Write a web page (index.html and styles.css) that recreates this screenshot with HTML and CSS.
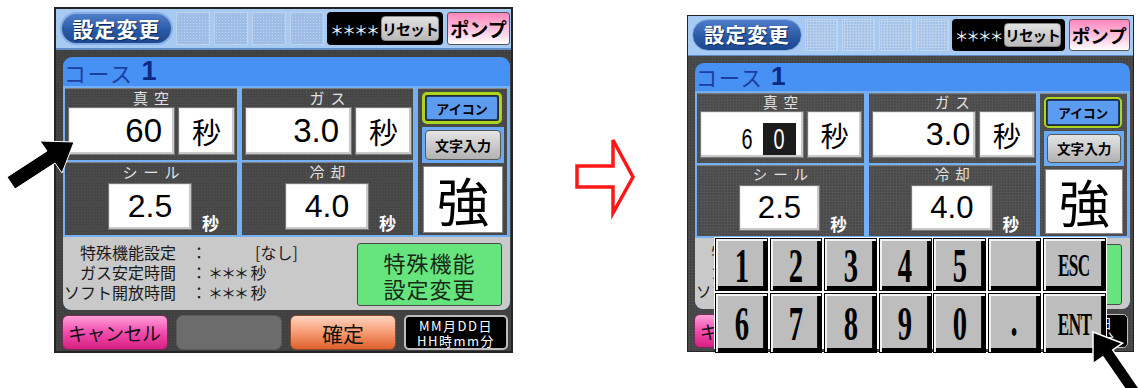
FILE: index.html
```html
<!DOCTYPE html>
<html lang="ja">
<head>
<meta charset="utf-8">
<title>設定変更</title>
<link rel="stylesheet" href="styles.css">
</head>
<body>
<div class="page">

  <div class="screen screen-left">
    <div class="hdr">
      <div class="pill">設定変更</div>
      <div class="sq"></div><div class="sq"></div><div class="sq"></div><div class="sq sq-last"></div>
      <div class="reset"><span class="stars">＊＊＊＊</span><span class="reset-btn">リセット</span></div>
      <div class="pump">ポンプ</div>
    </div>
    <div class="body">
      <div class="panel">
        <div class="course"><span class="course-label">コース</span><span class="course-num">1</span></div>
        <div class="grid">
          <div class="cell">
            <div class="cell-label">真空</div>
            <div class="cell-inputs">
              <div class="num num-wide">60</div>
              <div class="num unit">秒</div>
            </div>
          </div>
          <div class="cell">
            <div class="cell-label">ガス</div>
            <div class="cell-inputs">
              <div class="num num-wide">3.0</div>
              <div class="num unit">秒</div>
            </div>
          </div>
          <div class="side">
            <div class="icon-frame"><div class="icon-btn">アイコン</div></div>
            <div class="text-frame"><div class="text-btn">文字入力</div></div>
            <div class="strength">強</div>
          </div>
          <div class="cell">
            <div class="cell-label">シール</div>
            <div class="cell-row2">
              <div class="num num-small">2.5</div>
              <span class="unit-small">秒</span>
            </div>
          </div>
          <div class="cell">
            <div class="cell-label">冷却</div>
            <div class="cell-row2">
              <div class="num num-small">4.0</div>
              <span class="unit-small">秒</span>
            </div>
          </div>
        </div>
        <div class="info">
          <div class="info-lines">
            <div class="line"><span class="lbl">特殊機能設定</span><span class="colon">：</span><span class="val val-none">[なし]</span></div>
            <div class="line"><span class="lbl">ガス安定時間</span><span class="colon">：</span><span class="val"><span class="stars-sm">＊＊＊</span> 秒</span></div>
            <div class="line"><span class="lbl">ソフト開放時間</span><span class="colon">：</span><span class="val"><span class="stars-sm">＊＊＊</span> 秒</span></div>
          </div>
          <div class="special">特殊機能<br>設定変更</div>
        </div>
      </div>
      <div class="footer">
        <div class="fbtn cancel">キャンセル</div>
        <div class="fbtn blank"></div>
        <div class="fbtn ok">確定</div>
        <div class="fbtn date"><span>MM月DD日</span><span>HH時mm分</span></div>
      </div>
    </div>
  </div>

  <svg class="next-arrow" viewBox="0 0 70 85" width="70" height="85">
    <polygon points="7,31 43,31 43,5 63,42 43,78 43,52 7,52" fill="#fff" stroke="#ff1616" stroke-width="3.5"/>
  </svg>

  <div class="right-wrap">
    <div class="screen screen-right">
      <div class="hdr">
        <div class="pill">設定変更</div>
        <div class="sq"></div><div class="sq"></div><div class="sq"></div><div class="sq sq-last"></div>
        <div class="reset"><span class="stars">＊＊＊＊</span><span class="reset-btn">リセット</span></div>
        <div class="pump">ポンプ</div>
      </div>
      <div class="body">
        <div class="panel">
          <div class="course"><span class="course-label">コース</span><span class="course-num">1</span></div>
          <div class="grid">
            <div class="cell">
              <div class="cell-label">真空</div>
              <div class="cell-inputs">
                <div class="num num-wide num-edit">
                  <span class="digit"><span>6</span></span>
                  <span class="digit digit-sel"><span>0</span></span>
                </div>
                <div class="num unit">秒</div>
              </div>
            </div>
            <div class="cell">
              <div class="cell-label">ガス</div>
              <div class="cell-inputs">
                <div class="num num-wide num-tight">3.0</div>
                <div class="num unit">秒</div>
              </div>
            </div>
            <div class="side">
              <div class="icon-frame"><div class="icon-btn">アイコン</div></div>
              <div class="text-frame"><div class="text-btn">文字入力</div></div>
              <div class="strength">強</div>
            </div>
            <div class="cell">
              <div class="cell-label">シール</div>
              <div class="cell-row2">
                <div class="num num-small">2.5</div>
                <span class="unit-small">秒</span>
              </div>
            </div>
            <div class="cell">
              <div class="cell-label">冷却</div>
              <div class="cell-row2">
                <div class="num num-small">4.0</div>
                <span class="unit-small">秒</span>
              </div>
            </div>
          </div>
          <div class="info">
            <div class="info-lines">
              <div class="line"><span class="lbl">特殊機能設定</span><span class="colon">：</span><span class="val val-none">[なし]</span></div>
              <div class="line"><span class="lbl">ガス安定時間</span><span class="colon">：</span><span class="val"><span class="stars-sm">＊＊＊</span> 秒</span></div>
              <div class="line"><span class="lbl">ソフト開放時間</span><span class="colon">：</span><span class="val"><span class="stars-sm">＊＊＊</span> 秒</span></div>
            </div>
            <div class="special">特殊機能<br>設定変更</div>
          </div>
        </div>
        <div class="footer">
          <div class="fbtn cancel">キャンセル</div>
          <div class="fbtn blank"></div>
          <div class="fbtn ok">確定</div>
          <div class="fbtn date"><span>MM月DD日</span><span>HH時mm分</span></div>
        </div>
      </div>

      <div class="keypad">
        <div class="key"><span>1</span></div>
        <div class="key"><span>2</span></div>
        <div class="key"><span>3</span></div>
        <div class="key"><span>4</span></div>
        <div class="key"><span>5</span></div>
        <div class="key"></div>
        <div class="key key-word"><span>ESC</span></div>
        <div class="key"><span>6</span></div>
        <div class="key"><span>7</span></div>
        <div class="key"><span>8</span></div>
        <div class="key"><span>9</span></div>
        <div class="key"><span>0</span></div>
        <div class="key key-dot"><span>.</span></div>
        <div class="key key-word"><span>ENT</span></div>
      </div>
    </div>
  </div>

  <svg class="pointer pointer-left" viewBox="0 130 90 70" width="90" height="70">
    <polygon points="74,142 40,141 47,151 7,177 15,189 55,163 62,173" fill="#000" stroke="#fff" stroke-width="1"/>
  </svg>
  <svg class="pointer pointer-right" viewBox="1080 320 59 68" width="59" height="68">
    <polygon points="1093,332 1122.6,343.2 1112.7,350 1141.4,391.6 1131.6,398.4 1102.9,356.8 1093,363.6" fill="#000" stroke="#fff" stroke-width="1.5"/>
  </svg>
</div>
</body>
</html>
```

FILE: styles.css
```css
* { box-sizing: border-box; }

body {
  margin: 0;
  background: #fff;
  font-family: "Noto Sans CJK JP", "Liberation Sans", sans-serif;
}

.page {
  position: relative;
  width: 1139px;
  height: 388px;
  overflow: hidden;
  display: flex;
  align-items: flex-start;
  padding-left: 54px;
}

/* ---------- screen ---------- */
.screen {
  flex: none;
  position: relative;
  width: 459px;
  height: 346px;
  border: 2px solid #242424;
  background: #3e3e3e;
  display: flex;
  flex-direction: column;
}
.screen-left { margin-top: 7px; }

.next-arrow { flex: none; margin-left: 57px; margin-top: 135px; }

.right-wrap { flex: none; margin-left: 47px; margin-top: 15px; }
.screen-right { zoom: 0.9737; }

/* ---------- header ---------- */
.hdr {
  flex: none;
  height: 41px;
  background: #a7caf3;
  border-bottom: 2px solid #5f8bc6;
  display: flex;
  align-items: flex-start;
  padding: 3px 0 0 4px;
}
.pill {
  width: 113px;
  height: 33px;
  margin-right: 3px;
  border-radius: 17px;
  border: 2px solid #86aee4;
  background: linear-gradient(#4f7fcb, #2a5aa6 55%, #1c478e);
  color: #fff;
  font-weight: bold;
  font-size: 21px;
  letter-spacing: 1px;
  line-height: 29px;
  text-align: center;
  text-shadow: 1px 1px 0 #0e2c5c;
}
.sq {
  width: 34px;
  height: 33px;
  margin-right: 4px;
  background-color: #9dbde6;
  background-image: radial-gradient(rgba(255,255,255,0.35) 1px, transparent 1px);
  background-size: 3px 3px;
  border: 1px solid #bfd4ef;
}
.sq-last { margin-right: 3px; }
.reset {
  width: 116px;
  height: 33px;
  margin-right: 4px;
  background: #000;
  border-radius: 4px;
  display: flex;
  align-items: center;
  padding-left: 3px;
}
.stars {
  color: #fff;
  font-size: 14px;
  letter-spacing: -2px;
  width: 51px;
  white-space: nowrap;
}
.reset-btn {
  height: 25px;
  width: 58px;
  background: linear-gradient(#e2e2e2, #b9b9b9);
  border: 1px solid #8a8a8a;
  border-radius: 4px;
  color: #000;
  font-weight: bold;
  font-size: 15px;
  line-height: 23px;
  text-align: center;
  letter-spacing: -1px;
  white-space: nowrap;
}
.pump {
  width: 63px;
  height: 33px;
  border: 1px solid #555;
  border-radius: 3px;
  background: linear-gradient(#ff86bd, #ffc5de 55%, #fff);
  color: #000;
  font-weight: bold;
  font-size: 19px;
  line-height: 31px;
  text-align: center;
}

/* ---------- body ---------- */
.body {
  flex: 1;
  display: flex;
  flex-direction: column;
  padding-top: 7px;
  background-color: #404040;
  background-image: radial-gradient(rgba(255,255,255,0.07) 1px, transparent 1px);
  background-size: 3px 3px;
}
.panel {
  flex: none;
  margin-left: 7px;
  width: 447px;
  height: 253px;
  background: #4790f4;
  border-radius: 9px 9px 8px 8px;
  overflow: hidden;
  display: flex;
  flex-direction: column;
}
.course {
  flex: none;
  height: 29px;
  display: flex;
  align-items: center;
  padding-left: 1px;
}
.course-label {
  color: #1d3f9f;
  font-size: 22px;
  letter-spacing: 1.5px;
}
.course-num {
  margin-left: 8px;
  color: #0b2a80;
  font-family: "Liberation Sans", sans-serif;
  font-weight: bold;
  font-size: 27px;
}

.grid {
  flex: none;
  height: 151px;
  background: #74b0f6;
  padding: 2px 3px 2px 2px;
  display: grid;
  grid-template-columns: 172px 171px 89px;
  grid-template-rows: 72px 73px;
  column-gap: 5px;
  row-gap: 2px;
}
.cell {
  background-color: #474747;
  background-image: radial-gradient(rgba(255,255,255,0.08) 1px, transparent 1px);
  background-size: 3px 3px;
  box-shadow: inset 0 1px 0 #7a7a7a;
}
.cell-label {
  height: 19px;
  line-height: 19px;
  color: #e2e2e2;
  font-size: 15px;
  letter-spacing: 6px;
  padding-left: 6px;
  text-align: center;
}
.cell-inputs {
  display: flex;
  gap: 3px;
  padding-left: 3px;
  height: 48px;
}
.num {
  background: #fff;
  border: 1px solid #777;
  box-shadow: inset -2px -2px 0 #c9c9c9, inset 1px 1px 0 #ececec;
  color: #000;
  font-family: "Liberation Sans", sans-serif;
  font-size: 33px;
  display: flex;
  align-items: center;
  justify-content: flex-end;
}
.num-wide { width: 107px; padding-right: 12px; }
.num-tight { padding-right: 5px; }
.unit {
  width: 57px;
  justify-content: center;
  font-family: "Noto Sans CJK JP", sans-serif;
  font-size: 29px;
}
.cell-row2 {
  display: flex;
  align-items: flex-end;
  padding-left: 43px;
  margin-top: 2px;
}
.num-small {
  width: 84px;
  height: 47px;
  justify-content: center;
  font-size: 32px;
}
.unit-small {
  margin-left: 10px;
  margin-bottom: -2px;
  color: #fff;
  font-weight: bold;
  font-size: 17px;
  line-height: 18px;
}

/* edit state (right screen) */
.num-edit {
  align-items: flex-end;
  padding: 0 7px 2px 0;
  font-size: 30px;
}
.digit {
  display: flex;
  justify-content: center;
  align-items: center;
  width: 12px;
  height: 33px;
  margin-right: 10px;
}
.digit span { display: inline-block; transform: scaleX(0.68); }
.digit-sel {
  width: 34px;
  margin-right: 0;
  background: #1b1b1b;
  color: #fff;
}

/* side column */
.side {
  grid-column: 3;
  grid-row: 1 / 3;
  background-color: #474747;
  background-image: radial-gradient(rgba(255,255,255,0.08) 1px, transparent 1px);
  background-size: 3px 3px;
  box-shadow: inset 0 1px 0 #8a8a8a;
  padding: 4px 0 0 4px;
  display: flex;
  flex-direction: column;
  gap: 3px;
}
.icon-frame {
  width: 80px;
  height: 32px;
  border: 3px solid #acd51e;
  border-radius: 5px;
  background: #2a2a2a;
  padding: 1px;
}
.icon-btn {
  height: 100%;
  background: #5c9cf0;
  border: 1px solid #1f3f70;
  border-radius: 2px;
  color: #000;
  font-weight: bold;
  font-size: 13px;
  display: flex;
  align-items: center;
  justify-content: center;
}
.text-frame {
  width: 82px;
  height: 36px;
  background: #6aaaf5;
  padding: 3px;
}
.text-btn {
  height: 100%;
  background: linear-gradient(#e4e4e4, #b2b2b2);
  border: 1px solid #555;
  border-radius: 4px;
  color: #000;
  font-weight: bold;
  font-size: 14px;
  display: flex;
  align-items: center;
  justify-content: center;
}
.strength {
  width: 80px;
  height: 67px;
  margin-left: 1px;
  background: #fff;
  border: 1px solid #888;
  color: #000;
  font-size: 52px;
  line-height: 1;
  display: flex;
  align-items: center;
  justify-content: center;
}

/* info */
.info {
  flex: none;
  height: 73px;
  background: #c9c9c9;
  border-radius: 0 0 8px 8px;
  display: flex;
}
.info-lines {
  flex: 1;
  padding-top: 5px;
}
.line {
  height: 20px;
  display: flex;
  align-items: center;
  color: #1a1a1a;
  font-size: 16px;
  line-height: 20px;
  white-space: nowrap;
}
.lbl { width: 113px; text-align: right; }
.colon { width: 16px; margin-left: 15px; }
.val { margin-left: 1px; }
.val-none { margin-left: 48px; }
.stars-sm { font-size: 15px; letter-spacing: -2px; }
.special {
  flex: none;
  width: 145px;
  height: 63px;
  margin: 6px 8px 0 0;
  background: #66e57e;
  border: 1px solid #4a4a4a;
  border-radius: 3px;
  color: #162a16;
  font-size: 22px;
  line-height: 26px;
  display: flex;
  align-items: center;
  justify-content: center;
  text-align: center;
  letter-spacing: 1px;
}

/* footer */
.footer {
  flex: none;
  height: 41px;
  display: flex;
  gap: 8px;
  padding: 5px 0 0 6px;
}
.fbtn {
  flex: none;
  width: 106px;
  height: 35px;
  border-radius: 6px;
  color: #111;
  font-size: 21px;
  display: flex;
  align-items: center;
  white-space: nowrap;
}
.cancel {
  background: linear-gradient(#ff9fd8, #f24cae 50%, #d61f80);
  border: 1px solid #7a2a5a;
  padding-left: 5px;
  font-size: 19px;
  letter-spacing: -0.5px;
  overflow: hidden;
}
.blank {
  background: #6c6c6c;
  border: 1px solid #5a5a5a;
  border-radius: 7px;
}
.ok {
  background: linear-gradient(#ffd4c0, #f79b72 50%, #de602c);
  border: 1px solid #8a4a2a;
  justify-content: center;
}
.date {
  width: 104px;
  background: #000;
  border: 2px solid #bdbdbd;
  border-radius: 5px;
  color: #fff;
  font-size: 13px;
  line-height: 15px;
  letter-spacing: 1.5px;
  flex-direction: column;
  justify-content: center;
}

/* keypad overlay */
.keypad {
  position: absolute;
  left: 27px;
  top: 227px;
  width: 403px;
  height: 115px;
  background: #fff;
  padding: 1px;
  display: grid;
  grid-template-columns: repeat(7, 1fr);
  grid-template-rows: repeat(2, 1fr);
  gap: 2px;
}
.key {
  background: #bdbdbd;
  border: 1px solid #000;
  box-shadow: inset 2px 2px 0 #f4f4f4, inset -4px -4px 0 #000;
  display: flex;
  align-items: center;
  justify-content: center;
  padding-top: 3px;
  color: #000;
  font-family: "Liberation Serif", serif;
  font-weight: bold;
  font-size: 49px;
  line-height: 1;
}
.key span { display: inline-block; transform: scaleX(0.6); }
.key-word { font-size: 32px; letter-spacing: -1px; }
.key-word span { transform: scaleX(0.55); }
.key-dot { align-items: flex-end; padding-bottom: 8px; }

/* pointers */
.pointer { position: absolute; }
.pointer-left { left: 0; top: 130px; }
.pointer-right { left: 1080px; top: 320px; }
```
